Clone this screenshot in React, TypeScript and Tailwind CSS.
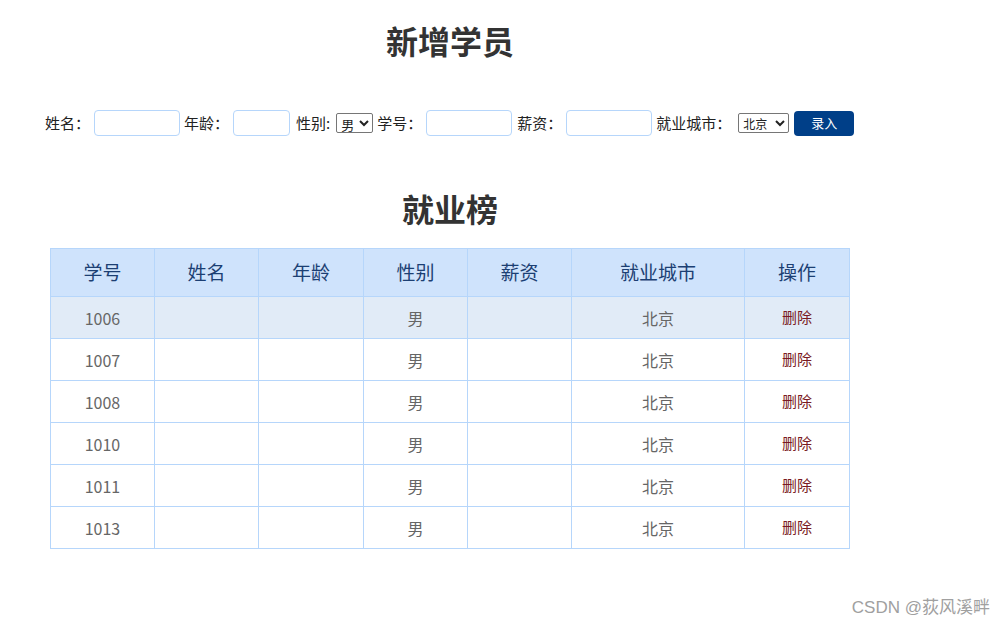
import React from 'react';

const rows = ['1006', '1007', '1008', '1010', '1011', '1013'];
const heads = ['学号', '姓名', '年龄', '性别', '薪资', '就业城市', '操作'];
const widths = ['w-[104px]', 'w-[104px]', 'w-[105px]', 'w-[104px]', 'w-[104px]', 'w-[173px]', 'w-[105px]'];

const Input = ({ w }: { w: string }) => (
  <input className={`${w} h-[26px] border border-[#b6d6fb] rounded-[4px] bg-white outline-none`} />
);

const App = () => {
  return (
    <div
      className="min-h-screen bg-white relative text-[#222]"
      style={{ fontFamily: '"Noto Sans CJK SC", "Noto Sans", sans-serif' }}
    >
      <div className="w-[810px] ml-[45px] flex flex-col">
        <h1 className="text-[32px] font-bold text-[#333] text-center mt-[16px] leading-[48px]">新增学员</h1>

        <div className="flex items-center mt-[44px] text-[15px] h-[30px]">
          <span className="mr-[4px]">姓名：</span>
          <Input w="w-[86px]" />
          <span className="mx-[4px]">年龄：</span>
          <Input w="w-[57px]" />
          <span className="ml-[6px] mr-[6px]">性别:</span>
          <select className="h-[20px] w-[37px] border border-[#767676] rounded-[2px] text-[13px] py-0 leading-none bg-white">
            <option>男</option>
            <option>女</option>
          </select>
          <span className="mx-[4px]">学号：</span>
          <Input w="w-[86px]" />
          <span className="ml-[5px] mr-[4px]">薪资：</span>
          <Input w="w-[86px]" />
          <span className="ml-[4px] mr-[7px]">就业城市：</span>
          <select className="h-[20px] w-[51px] border border-[#767676] rounded-[2px] text-[12px] py-0 leading-none bg-white">
            <option>北京</option>
            <option>上海</option>
          </select>
          <button className="ml-[5px] w-[60px] h-[25px] bg-[#003f88] text-white text-[13px] rounded-[4px]">录入</button>
        </div>

        <h2 className="text-[32px] font-bold text-[#333] text-center mt-[46px] leading-[48px]">就业榜</h2>

        <table className="ml-[5px] mt-[16px] w-[800px] border-collapse table-fixed">
          <thead>
            <tr className="h-[48px] bg-[#cfe3fc]">
              {heads.map((h, i) => (
                <th
                  key={h}
                  className={`${widths[i]} border border-[#b6d6fb] text-[19px] font-normal text-[#1c3f73]`}
                >
                  {h}
                </th>
              ))}
            </tr>
          </thead>
          <tbody>
            {rows.map((id, idx) => (
              <tr key={id} className={`h-[42px] text-[16px] text-[#666] ${idx === 0 ? 'bg-[#e1ebf7]' : 'bg-white'}`}>
                <td className="border border-[#b6d6fb] text-center">{id}</td>
                <td className="border border-[#b6d6fb]"></td>
                <td className="border border-[#b6d6fb]"></td>
                <td className="border border-[#b6d6fb] text-center">男</td>
                <td className="border border-[#b6d6fb]"></td>
                <td className="border border-[#b6d6fb] text-center">北京</td>
                <td className="border border-[#b6d6fb] text-center text-[15px] text-[#7a1a22]">删除</td>
              </tr>
            ))}
          </tbody>
        </table>
      </div>

      <div
        className="absolute right-[15px] top-[595px] text-[17px] text-[#a0a0a0]"
        style={{ fontFamily: '"Liberation Sans", "Noto Sans CJK SC", sans-serif' }}
      >
        CSDN @荻风溪畔
      </div>
    </div>
  );
};

export default App;
